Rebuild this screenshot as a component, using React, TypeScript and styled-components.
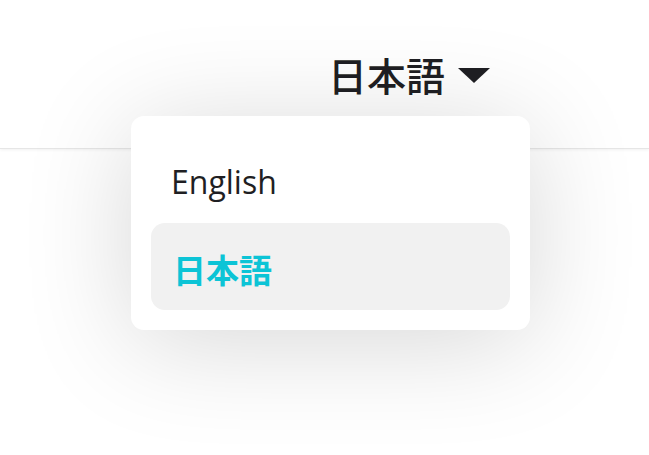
import React from 'react';
import styled, {createGlobalStyle} from 'styled-components';

const GlobalStyle = createGlobalStyle`
  html, body {
    margin: 0;
    padding: 0;
    background: #ffffff;
  }

  body {
    font-family: "Open Sans", "Noto Sans CJK JP", sans-serif;
    color: #1f1f23;
    overflow: hidden;
  }
`;

const Page = styled.div`
  width: 649px;
  height: 455px;
  background: #ffffff;
`;

const Header = styled.header`
  height: 149px;
  display: flex;
  align-items: center;
  justify-content: flex-end;
  padding-right: 159px;
  box-sizing: border-box;
  border-bottom: 1px solid #e6e6e6;
  box-shadow: 0 1px 3px rgba(0, 0, 0, 0.06);
`;

const LangSwitch = styled.div`
  position: relative;
  height: 50px;
  display: flex;
  align-items: center;
`;

const Trigger = styled.button`
  display: flex;
  align-items: center;
  gap: 13px;
  border: 0;
  padding: 0;
  background: none;
  cursor: pointer;
  font-family: "Noto Sans CJK JP", sans-serif;
  font-size: 39px;
  font-weight: 500;
  color: #1f1f23;
  line-height: 50px;
`;

const Caret = styled.svg`
  width: 32px;
  height: 15px;
  margin-top: 2px;
`;

const Menu = styled.ul`
  position: absolute;
  top: calc(100% + 17px);
  right: -40px;
  width: 399px;
  margin: 0;
  padding: 20px;
  box-sizing: border-box;
  list-style: none;
  background: #ffffff;
  border-radius: 13px;
  box-shadow: 0 12px 110px rgba(0, 0, 0, 0.16);
`;

const MenuItem = styled.li<{ $active?: boolean; $cjk?: boolean }>`
  height: 87px;
  display: flex;
  align-items: center;
  box-sizing: border-box;
  padding: 4px 0 0 ${p => (p.$cjk ? '22px' : '20px')};
  border-radius: 14px;
  background: ${p => (p.$active ? '#f1f1f1' : 'transparent')};
  color: ${p => (p.$active ? '#0cc4d6' : '#1f1f23')};
  font-family: ${p => (p.$cjk ? '"Noto Sans CJK JP", sans-serif' : '"Open Sans", sans-serif')};
  font-size: ${p => (p.$cjk ? '33px' : '32px')};
  font-weight: ${p => (p.$active ? 700 : 500)};
  cursor: pointer;
`;

const languages = [
    {code: 'en', label: 'English', cjk: false},
    {code: 'ja', label: '日本語', cjk: true},
];

export default function App() {
    const current = 'ja';

    return <Page>
        <GlobalStyle/>
        <Header>
            <LangSwitch>
                <Trigger>
                    日本語
                    <Caret viewBox="0 0 32 15">
                        <polygon points="0,0 32,0 16,15" fill="#1f1f23"/>
                    </Caret>
                </Trigger>
                <Menu>
                    {languages.map(l => <MenuItem key={l.code} $active={l.code === current} $cjk={l.cjk}>
                        {l.label}
                    </MenuItem>)}
                </Menu>
            </LangSwitch>
        </Header>
    </Page>;
}
